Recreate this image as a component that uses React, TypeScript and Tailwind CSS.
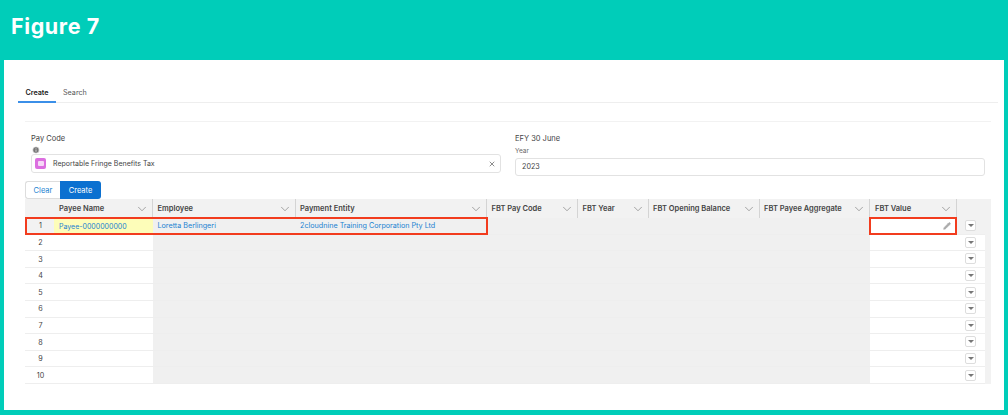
import React from 'react';
import { ChevronDown, X, Info, Pencil } from 'lucide-react';

const columns = [
  { label: 'Payee Name', width: 'w-[99px]', pad: 'pl-[5px]' },
  { label: 'Employee', width: 'w-[142.5px]', pad: 'pl-[4.5px]' },
  { label: 'Payment Entity', width: 'w-[191px]', pad: 'pl-[4.5px]' },
  { label: 'FBT Pay Code', width: 'w-[91px]', pad: 'pl-[5px]' },
  { label: 'FBT Year', width: 'w-[71px]', pad: 'pl-[5px]' },
  { label: 'FBT Opening Balance', width: 'w-[111px]', pad: 'pl-[4.5px]' },
  { label: 'FBT Payee Aggregate', width: 'w-[110.5px]', pad: 'pl-[4.5px]' },
  { label: 'FBT Value', width: 'w-[86.5px]', pad: 'pl-[5px]' },
];

function RowMenu() {
  return (
    <div className="flex w-[28.5px] justify-center">
      <div className="flex h-[11px] w-[11px] items-center justify-center rounded-[2px] border border-[#dddddd] bg-white">
        <div className="h-0 w-0 border-x-[3px] border-t-[3px] border-x-transparent border-t-[#777777]" />
      </div>
    </div>
  );
}

function Row({ n }: { n: number }) {
  const first = n === 1;
  return (
    <div className="flex h-[16.6px] border-b border-[#eeeeee] text-[7.2px] text-[#444444]">
      <div className={`flex w-[29px] items-center justify-center pl-[2px] pt-[2px] ${first ? 'bg-[#f2f2f2]' : 'bg-white'}`}>{n}</div>
      <div className={`flex w-[99px] items-center pl-[5px] pt-[2px] text-[7px] ${first ? 'bg-[#fdfdb9] text-[#1b82d1]' : 'bg-white'}`}>
        {first && 'Payee-0000000000'}
      </div>
      <div className="flex w-[142.5px] items-center bg-[#f0f0f0] pl-[4.5px] pt-[2px] text-[#1b82d1]">{first && 'Loretta Berlingeri'}</div>
      <div className="flex w-[191px] items-center bg-[#f0f0f0] pl-[4.5px] pt-[2px] text-[#1b82d1]">
        {first && '2cloudnine Training Corporation Pty Ltd'}
      </div>
      <div className="w-[383.5px] bg-[#f0f0f0]" />
      <div className="flex w-[86.5px] items-center justify-end bg-white pr-[6px]">
        {first && <Pencil size={8} className="fill-[#aaaaaa] text-[#aaaaaa]" />}
      </div>
      <div className={`flex items-center ${first ? 'bg-[#f2f2f2]' : 'bg-white'}`}>
        <RowMenu />
      </div>
    </div>
  );
}

export default function App() {
  return (
    <div className="flex h-[415px] w-[1008px] flex-col overflow-hidden bg-[#00cdb9] px-[4px] pb-[5px]">
      <div className="flex h-[60px] items-center pl-[7px] pb-[8px]">
        <h1 className="font-['Inter',sans-serif] text-[21.5px] font-bold tracking-[0.6px] text-white">Figure 7</h1>
      </div>

      <div className="relative h-[350px] bg-white font-['Inter','Liberation_Sans',sans-serif] text-[#444444]">
        {/* Tabs */}
        <div className="ml-[14px] mr-[6px] flex h-[43px] items-end border-b border-[#eeeeee]">
          <div className="-mb-px flex h-[21px] w-[38px] items-center justify-center border-b-2 border-[#3b8fe8] pt-[3px] text-[7.2px] font-semibold text-[#222222]">
            Create
          </div>
          <div className="flex h-[21px] items-center pl-[7px] pt-[3px] text-[7.2px] text-[#555555]">Search</div>
        </div>

        <div className="ml-[21px] mt-[18px] w-[966px] border-t border-[#f2f2f2]">
          {/* Form */}
          <div className="flex h-[59px] pl-[6px]">
            <div className="w-[484px] pt-[11px]">
              <div className="text-[7.5px] leading-[11px] text-[#444444]">Pay Code</div>
              <Info size={8} className="ml-[1px] mt-[2px] fill-[#777777] text-white" />
              <div className="flex h-[19px] w-[470px] items-center rounded-[3px] border border-[#e2e2e2] pl-[3px] pr-[4px]">
                <div className="flex h-[11px] w-[11px] items-center justify-center rounded-[2px] bg-[#dc6fe0]">
                  <div className="h-[5px] w-[6px] rounded-[1px] bg-[#f6d9f7]" />
                </div>
                <span className="ml-[7px] flex-1 pt-[2px] text-[7px]">Reportable Fringe Benefits Tax</span>
                <X size={8} className="text-[#555555]" />
              </div>
            </div>
            <div className="w-[470px] pt-[11px]">
              <div className="text-[7.5px] leading-[11px] text-[#444444]">EFY 30 June</div>
              <div className="mt-[3px] text-[6.5px] leading-[9px] text-[#666666]">Year</div>
              <div className="mt-[2px] flex h-[18px] items-center rounded-[3px] border border-[#e2e2e2] pl-[6px] text-[7.2px]">
                2023
              </div>
            </div>
          </div>

          {/* Buttons */}
          <div className="flex h-[18px] w-[76px] text-[7.5px]">
            <div className="flex w-[35px] items-center justify-center rounded-l-[3px] border border-r-0 border-[#dddddd] bg-white pt-[1px] text-[#1b82d1]">
              Clear
            </div>
            <div className="flex w-[41px] items-center justify-center rounded-r-[3px] bg-[#0b70d0] pt-[1px] text-white">Create</div>
          </div>

          {/* Grid */}
          <div className="w-[966px] bg-[#f2f2f2]">
            <div className="flex h-[19px] text-[7.5px] font-semibold text-[#444444]">
              <div className="w-[29px]" />
              {columns.map((c) => (
                <div key={c.label} className={`flex items-center justify-between border-r border-[#d4d4d4] pr-[3px] ${c.width} ${c.pad}`}>
                  <span className="whitespace-nowrap pt-[1px]">{c.label}</span>
                  <ChevronDown size={14} strokeWidth={1.1} className="text-[#777777]" />
                </div>
              ))}
            </div>
            <div className="w-[960px]">
              {Array.from({ length: 10 }, (_, i) => (
                <Row key={i} n={i + 1} />
              ))}
            </div>
          </div>
        </div>

        {/* Red highlight boxes */}
        <div className="absolute left-[21px] top-[157px] h-[18px] w-[463px] border-2 border-[#f23c1e]" />
        <div className="absolute left-[865px] top-[157px] h-[18px] w-[88px] border-2 border-[#f23c1e]" />
      </div>
    </div>
  );
}
